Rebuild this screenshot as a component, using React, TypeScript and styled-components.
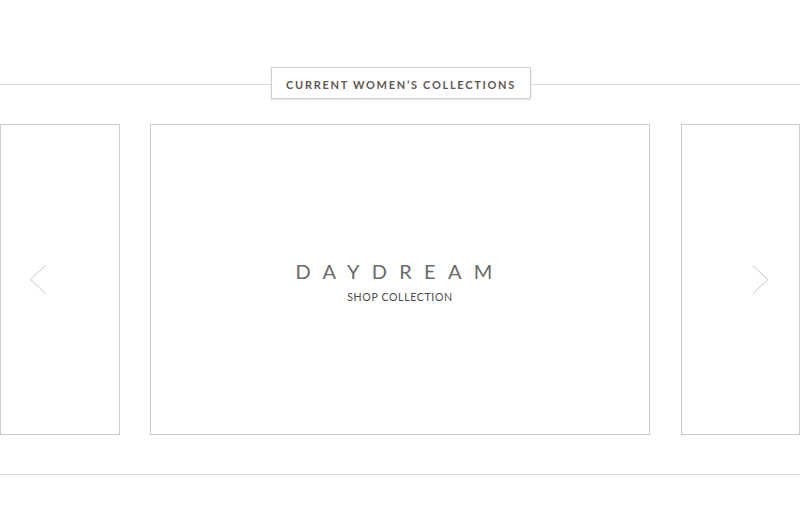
import React from "react";
import styled, { createGlobalStyle } from "styled-components";

const Global = createGlobalStyle`
  html, body { margin: 0; padding: 0; background: #fff; }
  body { font-family: Lato, "Open Sans", "Liberation Sans", sans-serif; }
`;

const Page = styled.div`
  width: 802px;
  height: 532px;
  overflow: hidden;
  padding-top: 67px;
  box-sizing: border-box;
`;

const Header = styled.div`
  position: relative;
  display: flex;
  justify-content: center;
  width: 802px;
  &::before {
    content: "";
    position: absolute;
    left: 0;
    right: 2px;
    top: 17px;
    height: 1px;
    background: #dcdcdc;
  }
`;

const TitleBox = styled.h2`
  position: relative;
  margin: 0;
  width: 260px;
  height: 32px;
  box-sizing: border-box;
  border: 1px solid #cfcfcf;
  background: #fff;
  box-shadow: 0 1px 2px rgba(0, 0, 0, 0.12);
  display: flex;
  align-items: center;
  justify-content: center;
  padding: 2px 0 0 0;
  font-size: 11px;
  font-weight: 700;
  letter-spacing: 1.7px;
  color: #5e5852;
  text-transform: uppercase;
`;

const Carousel = styled.div`
  position: relative;
  margin-top: 25px;
  display: grid;
  grid-template-columns: 120px 500px 120px;
  column-gap: 30px;
  height: 311px;
`;

const Slide = styled.div`
  box-sizing: border-box;
  border: 1px solid #cbcbcb;
  background: #fff;
  display: flex;
  flex-direction: column;
  align-items: center;
  justify-content: center;
  padding-top: 4px;
`;

const SideSlide = styled(Slide)<{ $right?: boolean }>`
  margin-left: ${(p) => (p.$right ? "1px" : "0")};
`;

const Name = styled.div`
  font-size: 20px;
  font-weight: 400;
  letter-spacing: 12.3px;
  color: #6a6a6a;
  line-height: 24px;
`;

const Shop = styled.div`
  margin-top: 8px;
  font-size: 10.6px;
  letter-spacing: 0.62px;
  color: #4a4a4a;
  line-height: 13px;
`;

const Arrow = styled.button<{ $side: "left" | "right" }>`
  position: absolute;
  top: 141px;
  ${(p) => (p.$side === "left" ? "left: 29px;" : "left: 751px;")}
  width: 18px;
  height: 30px;
  padding: 0;
  border: 0;
  background: transparent;
  cursor: pointer;
  display: block;
  svg { display: block; }
`;

const Footer = styled.div`
  margin-top: 39px;
  width: 800px;
  height: 1px;
  background: #dcdcdc;
`;

export default function App() {
  return (
    <>
      <Global />
      <Page>
        <Header>
          <TitleBox>Current Women’s Collections</TitleBox>
        </Header>
        <Carousel>
          <SideSlide />
          <Slide>
            <Name>DAYDREAM</Name>
            <Shop>SHOP COLLECTION</Shop>
          </Slide>
          <SideSlide $right />
          <Arrow $side="left" aria-label="Previous">
            <svg width="18" height="30" viewBox="0 0 18 30">
              <polyline points="16.5,0.5 1.5,14.5 16.5,28.5" fill="none" stroke="#c6c6c6" strokeWidth="1" />
            </svg>
          </Arrow>
          <Arrow $side="right" aria-label="Next">
            <svg width="18" height="30" viewBox="0 0 18 30">
              <polyline points="1.5,0.5 17,14.5 1.5,29" fill="none" stroke="#c6c6c6" strokeWidth="1" />
            </svg>
          </Arrow>
        </Carousel>
        <Footer />
      </Page>
    </>
  );
}
